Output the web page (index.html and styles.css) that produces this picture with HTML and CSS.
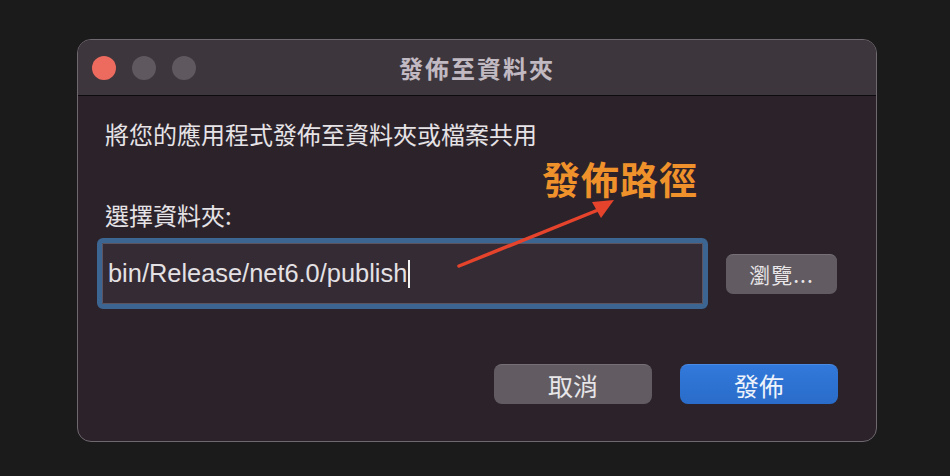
FILE: index.html
```html
<!DOCTYPE html>
<html lang="zh-Hant">
<head>
  <meta charset="UTF-8">
  <title>發佈至資料夾</title>
  <link rel="stylesheet" href="styles.css">
</head>
<body>
<div class="window">
  <div class="titlebar">
    <div class="lights">
      <span class="light red"></span>
      <span class="light"></span>
      <span class="light"></span>
    </div>
    <h1 class="title">發佈至資料夾</h1>
    <div></div>
  </div>
  <div class="content">
    <p class="desc">將您的應用程式發佈至資料夾或檔案共用</p>
    <p class="label">選擇資料夾:</p>
    <div class="path-row">
      <div class="field">
        <span class="field-text">bin/Release/net6.0/publish</span><span class="caret"></span>
      </div>
      <button class="btn browse">瀏覽...</button>
    </div>
    <div class="actions">
      <button class="btn cancel">取消</button>
      <button class="btn primary">發佈</button>
    </div>
  </div>
  <!-- annotation drawn on top of the screenshot -->
  <div class="note">發佈路徑</div>
  <svg class="arrow" width="800" height="403" viewBox="0 0 800 403">
    <line x1="381" y1="226" x2="525" y2="168" stroke="#e5432b" stroke-width="3.5" stroke-linecap="round"/>
    <polygon points="536,160 514,162 523,178" fill="#e5432b"/>
  </svg>
</div>
</body>
</html>
```

FILE: styles.css
```css
* {
  margin: 0;
  padding: 0;
  box-sizing: border-box;
}
html, body {
  height: 100%;
}
body {
  background: #1b1b1b;
  font-family: "Noto Sans CJK TC", "Liberation Sans", sans-serif;
  padding: 39px 0 0 77px;
}
.window {
  position: relative;
  width: 800px;
  height: 403px;
  background: #2b222a;
  border: 1px solid #6f686f;
  border-radius: 14px;
  overflow: hidden;
  display: flex;
  flex-direction: column;
}
.titlebar {
  height: 56px;
  background: #3d373d;
  border-bottom: 1px solid #0e0b0e;
  display: grid;
  grid-template-columns: 1fr auto 1fr;
  align-items: center;
}
.lights {
  display: flex;
  gap: 16px;
  padding-left: 14px;
}
.light {
  width: 24px;
  height: 24px;
  border-radius: 50%;
  background: #5f595f;
}
.light.red {
  background: #ec6a5e;
}
.title {
  font-size: 24px;
  font-weight: bold;
  letter-spacing: 2px;
  color: #c2bac2;
  line-height: 30px;
}
.content {
  flex: 1;
  padding: 23px 38px 0 19px;
  color: #e6e3e6;
}
.desc, .label {
  font-size: 24px;
  line-height: 30px;
  padding-left: 8px;
}
.label {
  margin-top: 51px;
}
.path-row {
  margin-top: 8px;
  display: flex;
  align-items: center;
  gap: 18px;
}
.field {
  width: 611px;
  height: 71px;
  border: 5px solid #3c6591;
  border-radius: 6px;
  background: #342b34;
  box-shadow: inset 0 0 0 1px #5c5560;
  display: flex;
  align-items: center;
  padding-left: 6px;
}
.field-text {
  font-family: "Liberation Sans", sans-serif;
  font-size: 25.4px;
  color: #e4e1e4;
}
.caret {
  width: 2px;
  height: 28px;
  background: #f2f2f2;
  margin-left: 1px;
}
.btn {
  border: none;
  font-family: "Noto Sans CJK TC", "Liberation Sans", sans-serif;
  color: #e8e6e8;
  background: #625c62;
  border-top: 1px solid #767076;
  height: 40px;
}
.browse {
  width: 111px;
  border-radius: 7px;
  font-size: 21px;
  letter-spacing: 1px;
}
.actions {
  margin-top: 55px;
  display: flex;
  justify-content: flex-end;
  gap: 28px;
}
.cancel, .primary {
  width: 158px;
  border-radius: 8px;
  font-size: 25px;
  line-height: 38px;
}
.primary {
  background: linear-gradient(#3179db, #2a6cc9);
  border-top: 1px solid #4a8be6;
  color: #eef3fb;
}
.note {
  position: absolute;
  left: 464px;
  top: 116px;
  font-size: 38px;
  font-weight: bold;
  line-height: 44px;
  color: #f0922b;
  letter-spacing: 1px;
}
.arrow {
  position: absolute;
  left: 0;
  top: 0;
  pointer-events: none;
}
```
